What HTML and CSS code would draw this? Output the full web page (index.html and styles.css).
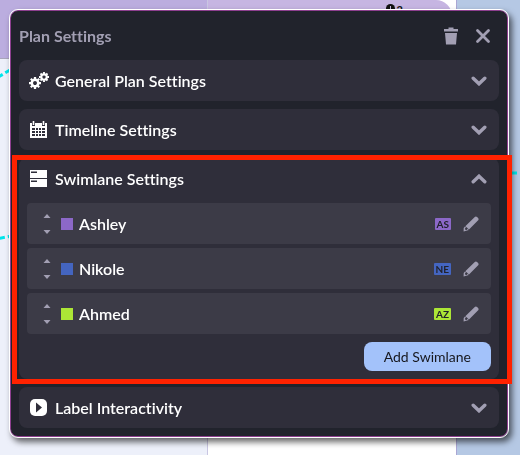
FILE: index.html
```html
<!DOCTYPE html>
<html lang="en">
<head>
    <meta charset="UTF-8">
    <meta name="viewport" content="width=device-width, initial-scale=1.0">
    <title>Plan Settings</title>
    <link rel="stylesheet" href="styles.css">
</head>
<body>
    <!-- Icon shapes shared by the panel -->
    <svg class="sprite" aria-hidden="true">
        <symbol id="chevron" viewBox="0 0 16 10">
            <path d="M2.200 2.200L8 7.800l5.800-5.600" fill="none" stroke="currentColor" stroke-width="3.400" stroke-linecap="round"/>
        </symbol>
        <symbol id="pencil" viewBox="0 0 16 16">
            <path d="M11.500 1.200a2 2 0 0 1 2.800 0l.6.6a2 2 0 0 1 0 2.800L6 13.600 2.300 10.200z" fill="currentColor"/>
            <path d="M2 10.500L5.800 14l-5.200 1.600.1-3.700z" fill="currentColor"/>
            <circle cx="3.200" cy="12.800" r="1.200" fill="#3c3b47"/>
        </symbol>
        <symbol id="gear" viewBox="-8 -8 16 16">
            <circle r="4.300" fill="none" stroke="currentColor" stroke-width="3.400"/>
            <path d="M0-8v3M0 8v-3M-8 0h3M8 0h-3M-5.600-5.600l2 2M5.600 5.600l-2-2M-5.600 5.600l2-2M5.600-5.600l-2 2" stroke="currentColor" stroke-width="3"/>
        </symbol>
        <symbol id="sort" viewBox="0 0 8 20">
            <path d="M.5 4L4 0l3.500 4zM.5 16L4 20l3.500-4z" fill="currentColor"/>
        </symbol>
    </svg>

    <!-- Plan chart behind the panel -->
    <div class="chart" aria-hidden="true">
        <div class="column column-left"><div class="bar"></div></div>
        <div class="column column-middle"><div class="bar bar-end"><span class="marker"></span>2</div></div>
        <div class="column column-right"></div>
        <svg class="links">
            <path d="M-5 79L10 70M-4 239L12 236M508 173h9"/>
        </svg>
    </div>

    <main class="panel">
        <header class="panel-header">
            <h1>Plan Settings</h1>
            <button type="button" class="icon-button" aria-label="Delete plan">
                <svg width="16" height="18" viewBox="0 0 16 18"><path d="M1 2h4.500V.5h5V2H15v2.500H1zM2 6h12l-1 11.500H3z" fill="currentColor"/></svg>
            </button>
            <button type="button" class="icon-button" aria-label="Close">
                <svg width="16" height="16" viewBox="0 0 16 16"><path d="M2.500 2.500l11 11M13.500 2.500l-11 11" stroke="currentColor" stroke-width="2.800" stroke-linecap="round"/></svg>
            </button>
        </header>

        <section class="section">
            <button type="button" class="section-toggle" aria-expanded="false">
                <svg class="section-icon" viewBox="0 0 20 18">
                    <use href="#gear" x="0" y="5" width="12" height="12"/>
                    <use href="#gear" x="10" y="0" width="10" height="10"/>
                </svg>
                <span>General Plan Settings</span>
                <svg class="chevron"><use href="#chevron"/></svg>
            </button>
        </section>

        <section class="section">
            <button type="button" class="section-toggle" aria-expanded="false">
                <svg class="section-icon" viewBox="0 0 20 18">
                    <path d="M1 2h2v3h3V2h7v3h3V2h2v15H1z" fill="currentColor"/>
                    <path d="M4.500 0v4M14.500 0v4" stroke="currentColor" stroke-width="1.600"/>
                    <path d="M3 7h3v2H3zM7 7h2v2H7zM10 7h2v2h-2zM13 7h3v2h-3zM3 10h3v2H3zM7 10h2v2H7zM10 10h2v2h-2zM13 10h3v2h-3zM3 13h3v2H3zM7 13h2v2H7zM10 13h2v2h-2zM13 13h3v2h-3z" fill="#2f2e3a"/>
                </svg>
                <span>Timeline Settings</span>
                <svg class="chevron"><use href="#chevron"/></svg>
            </button>
        </section>

        <section class="section highlighted">
            <button type="button" class="section-toggle" aria-expanded="true">
                <svg class="section-icon" viewBox="0 0 20 18">
                    <path d="M1 0h17v8H1zM1 9h17v8H1z" fill="currentColor"/>
                    <path d="M2 2.300h6M2 11.300h6" stroke="#2f2e3a" stroke-width="1.600"/>
                </svg>
                <span>Swimlane Settings</span>
                <svg class="chevron chevron-up"><use href="#chevron"/></svg>
            </button>
            <ul class="lanes">
                <li class="lane purple">
                    <svg class="sort"><use href="#sort"/></svg>
                    <span class="swatch"></span>
                    <span class="lane-name">Ashley</span>
                    <span class="tag">AS</span>
                    <button type="button" class="icon-button" aria-label="Edit Ashley"><svg width="16" height="16"><use href="#pencil"/></svg></button>
                </li>
                <li class="lane blue">
                    <svg class="sort"><use href="#sort"/></svg>
                    <span class="swatch"></span>
                    <span class="lane-name">Nikole</span>
                    <span class="tag">NE</span>
                    <button type="button" class="icon-button" aria-label="Edit Nikole"><svg width="16" height="16"><use href="#pencil"/></svg></button>
                </li>
                <li class="lane green">
                    <svg class="sort"><use href="#sort"/></svg>
                    <span class="swatch"></span>
                    <span class="lane-name">Ahmed</span>
                    <span class="tag">AZ</span>
                    <button type="button" class="icon-button" aria-label="Edit Ahmed"><svg width="16" height="16"><use href="#pencil"/></svg></button>
                </li>
            </ul>
            <button type="button" class="add-button">Add Swimlane</button>
        </section>

        <section class="section">
            <button type="button" class="section-toggle" aria-expanded="false">
                <svg class="section-icon" viewBox="0 0 20 18">
                    <rect x="1" y="0" width="17" height="17" rx="5" fill="currentColor"/>
                    <path d="M7 3.500l6 5-6 5z" fill="#2f2e3a"/>
                </svg>
                <span>Label Interactivity</span>
                <svg class="chevron"><use href="#chevron"/></svg>
            </button>
        </section>
    </main>
</body>
</html>
```

FILE: styles.css
```css
* {
    box-sizing: border-box;
}
body {
    margin: 0;
    padding: 10px 12px 16px 10px;
    font-family: Lato, "Liberation Sans", sans-serif;
    font-variant-ligatures: none;
    background-color: #b5c8e4;
}
button {
    font: inherit;
    border: none;
    background: none;
    padding: 0;
    cursor: pointer;
}
svg {
    display: block;
    flex-shrink: 0;
}
.sprite {
    position: absolute;
    width: 0;
    height: 0;
}

/* Chart behind the panel */
.chart {
    position: fixed;
    inset: 0;
    display: flex;
    overflow: hidden;
}
.column-left {
    flex: 0 0 40%;
    background-color: #edf0fa;
    border-right: 1px solid #c9c6e2;
}
.column-middle {
    flex: 1;
    background-color: white;
    border-right: 1px solid #aaa6d4;
}
.column-right {
    flex: 0 0 63px;
}
.bar {
    height: 59px;
    background-color: #bbaddf;
    border-bottom: 1px solid #a9a5bb;
}
.bar-end {
    display: flex;
    justify-content: flex-end;
    gap: 2px;
    margin-right: 4px;
    padding: 3px 49px 0 0;
    border-radius: 0 16px 16px 0;
    background-color: #c6b5e2;
    font-size: 11px;
    font-weight: bold;
    line-height: 14px;
    color: #111;
}
.marker {
    width: 9px;
    height: 9px;
    margin-top: 1px;
    border-radius: 50%;
    background: linear-gradient(#c6b5e2, #c6b5e2) center / 1px 5px no-repeat #111;
}
.links {
    position: absolute;
    inset: 0;
    width: 100%;
    height: 100%;
    fill: none;
    stroke: #00e5ea;
    stroke-width: 3;
    stroke-dasharray: 9 3;
}

/* Settings panel */
.panel {
    position: relative;
    display: flex;
    flex-direction: column;
    gap: 8px;
    padding: 8px;
    border: 1px solid #8d3f8f;
    border-radius: 8px;
    outline: 1px solid white;
    background-color: #21232c;
    box-shadow: 3px 4px 6px 1px rgba(0, 0, 0, 0.6);
}
.panel-header {
    display: flex;
    align-items: center;
    gap: 16px;
    height: 33px;
    padding-right: 8px;
    color: #a29fb3;
}
.panel-header h1 {
    flex: 1;
    margin: 0;
    font-size: 16px;
}
.icon-button {
    color: #a29fb3;
}
.section {
    position: relative;
    border-radius: 8px;
    background-color: #2f2e3a;
}
.section-toggle {
    display: flex;
    align-items: center;
    width: 100%;
    height: 41px;
    gap: 6px;
    padding: 0 12px 0 10px;
    color: white;
    font-size: 16px;
    font-weight: 600;
    text-align: left;
}
.section-toggle span {
    flex: 1;
}
.section-icon {
    width: 20px;
    height: 18px;
}
.chevron {
    width: 16px;
    height: 10px;
    color: #a29fb3;
}
.chevron-up {
    transform: rotate(180deg);
}

/* Red frame drawn round the open section */
.highlighted {
    padding-bottom: 8px;
}
.highlighted::after {
    content: "";
    position: absolute;
    inset: -3px -13px -5px -7px;
    border: 5px solid #ff2200;
    pointer-events: none;
}
.lanes {
    display: flex;
    flex-direction: column;
    gap: 4px;
    margin: 0;
    padding: 4px 8px 8px;
    list-style: none;
}
.lane {
    display: flex;
    align-items: center;
    height: 41px;
    padding: 0 12px 0 16px;
    border-radius: 4px;
    background-color: #3c3b47;
    color: white;
}
.purple {
    --lane-color: #8c68c8;
}
.blue {
    --lane-color: #4465c0;
}
.green {
    --lane-color: #ace636;
}
.sort {
    width: 8px;
    height: 20px;
    color: #a29fb3;
}
.swatch {
    width: 12px;
    height: 12px;
    margin: 0 6px 0 10px;
    background-color: var(--lane-color);
}
.lane-name {
    flex: 1;
    font-size: 16px;
    font-weight: 600;
}
.tag {
    margin-right: 12px;
    padding: 0 2px;
    border-radius: 1px;
    background-color: var(--lane-color);
    color: #21222b;
    font-size: 10px;
    font-weight: bold;
    line-height: 12px;
}
.add-button {
    display: block;
    height: 29px;
    margin: 0 8px 0 auto;
    padding: 0 20px;
    border-radius: 8px;
    background-color: #a3c2fa;
    color: #16171d;
    font-size: 14px;
}
```
